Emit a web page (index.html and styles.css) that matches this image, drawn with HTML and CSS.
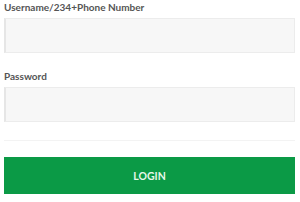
FILE: index.html
```
<!DOCTYPE html>
<html lang="en">
<head>
    <meta charset="UTF-8">
    <meta name="viewport" content="width=device-width, initial-scale=1.0">
    <title>Login</title>
    <link rel="stylesheet" href="styles.css">
</head>
<body>
    <form class="login-form">
        <div class="field">
            <label for="username">Username/234+Phone Number</label>
            <input type="text" id="username" class="text-input">
        </div>
        <div class="field">
            <label for="password">Password</label>
            <input type="password" id="password" class="text-input">
        </div>
        <hr class="divider">
        <button type="button" class="login-button">LOGIN</button>
    </form>
</body>
</html>
```

FILE: styles.css
```
* {
    box-sizing: border-box;
}

body {
    margin: 0;
    background-color: #fff;
    font-family: Lato, "Open Sans", Arial, sans-serif;
}

.login-form {
    display: flex;
    flex-direction: column;
    padding: 0 5px 0 4px;
}

.field {
    display: flex;
    flex-direction: column;
    margin-bottom: 16px;
}

.field label {
    font-size: 10px;
    font-weight: 700;
    line-height: 15px;
    color: #555;
    margin-bottom: 3px;
}

.text-input {
    height: 35px;
    margin: 0;
    background-color: #f7f7f7;
    border: 1px solid #ececec;
    border-left: 2px solid #e6e6e6;
    outline: none;
}

.divider {
    margin: 2px 0 16px;
    border: none;
    border-top: 1px solid #f3f3f3;
}

.login-button {
    height: 37px;
    border: none;
    background-color: #0b9a46;
    color: #e6f7ea;
    font-family: Lato, "Open Sans", Arial, sans-serif;
    font-size: 10.5px;
    font-weight: 700;
    cursor: pointer;
}
```
